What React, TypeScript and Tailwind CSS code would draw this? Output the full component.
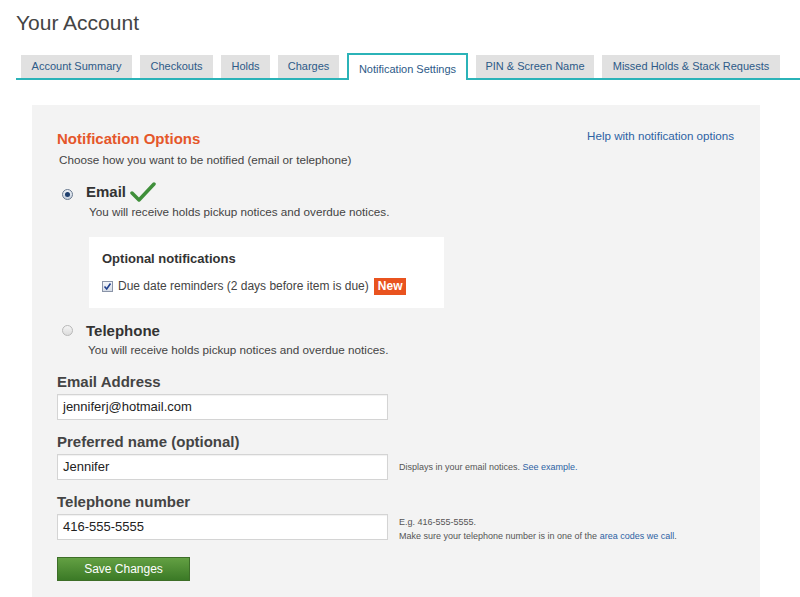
import { useState } from "react";

// ---------------------------------------------------------------------------
// Account tabs
// ---------------------------------------------------------------------------

const TABS = [
  { label: "Account Summary", w: "w-[111px]" },
  { label: "Checkouts", w: "w-[73px]" },
  { label: "Holds", w: "w-[49px]" },
  { label: "Charges", w: "w-[61px]" },
  { label: "Notification Settings", w: "w-[121px]", active: true },
  { label: "PIN & Screen Name", w: "w-[118px]" },
  { label: "Missed Holds & Stack Requests", w: "w-[178px]" },
];

function Tabs() {
  return (
    <div className="ml-[16px] flex items-end gap-[8px] border-b-2 border-[#2bb3b8] pl-[5px]">
      {TABS.map((t) =>
        t.active ? (
          <div
            key={t.label}
            className={`${t.w} -mb-[2px] flex h-[27px] items-center justify-center border-2 border-b-0 border-[#2bb3b8] bg-white pt-[3px] text-[11px] text-[#2d5a88]`}
          >
            {t.label}
          </div>
        ) : (
          <div
            key={t.label}
            className={`${t.w} flex h-[23px] items-center justify-center bg-[#e1e1e1] text-[11px] text-[#2d5a88]`}
          >
            {t.label}
          </div>
        )
      )}
    </div>
  );
}

// ---------------------------------------------------------------------------
// Small form bits
// ---------------------------------------------------------------------------

function Radio({ checked }: { checked?: boolean }) {
  return (
    <span
      className={`inline-flex h-[11px] w-[11px] items-center justify-center rounded-full border ${
        checked ? "border-[#6a7a90] bg-gradient-to-b from-[#eef2f8] to-[#c8d2de]" : "border-[#b8b8b8] bg-gradient-to-b from-[#f4f4f4] to-[#dcdcdc]"
      }`}
    >
      {checked && <span className="h-[5px] w-[5px] rounded-full bg-[#1f3f6e]" />}
    </span>
  );
}

function Check() {
  return (
    <svg width="26" height="22" viewBox="0 0 26 22" className="ml-[4px]">
      <path d="M2 12 L9 19 L24 3" fill="none" stroke="#3f8f3a" strokeWidth="3.5" strokeLinecap="round" strokeLinejoin="round" />
    </svg>
  );
}

function Field({ label, value, children }: { label: string; value: string; children?: React.ReactNode }) {
  return (
    <div className="mt-[13px]">
      <div className="text-[15px] font-bold leading-[18px] text-[#444]">{label}</div>
      <div className="mt-[3px] flex items-start">
        <div className="flex h-[26px] w-[331px] items-center border border-[#d4d4d4] bg-white px-[5px] text-[13px] text-[#222] shadow-[inset_0_1px_1px_rgba(0,0,0,0.06)]">
          {value}
        </div>
        <div className="ml-[11px] text-[9px] leading-[14px] text-[#555]">{children}</div>
      </div>
    </div>
  );
}

// ---------------------------------------------------------------------------
// Page
// ---------------------------------------------------------------------------

export default function App() {
  const [dueReminders, setDueReminders] = useState(true);

  return (
    <div className="h-[597px] overflow-hidden bg-white font-['Liberation_Sans',Arial,sans-serif]">
      <h1 className="pl-[16px] pt-[9px] text-[21px] leading-[28px] text-[#444]">Your Account</h1>

      <div className="mt-[16px]">
        <Tabs />
      </div>

      <div className="ml-[32px] mt-[25px] w-[728px] bg-[#f3f3f3] px-[25px] pt-[24px] pb-[30px]">
        <div className="flex items-start justify-between">
          <h2 className="text-[15px] font-bold leading-[20px] text-[#e5572a]">Notification Options</h2>
          <a className="mr-[1px] -mt-[2px] text-[11.6px] text-[#2d62a3]">Help with notification options</a>
        </div>
        <p className="ml-[2px] mt-[3px] text-[11.7px] leading-[16px] text-[#444]">
          Choose how you want to be notified (email or telephone)
        </p>

        {/* Email option */}
        <div className="mt-[12px] flex items-center">
          <span className="ml-[5px] mr-[13px]"><Radio checked /></span>
          <span className="text-[15px] font-bold leading-[18px] text-[#333]">Email</span>
          <Check />
        </div>
        <p className="ml-[32px] text-[11.7px] leading-[15px] text-[#444]">
          You will receive holds pickup notices and overdue notices.
        </p>

        <div className="ml-[32px] mt-[18px] w-[355px] bg-white px-[13px] pb-[13px] pt-[14px]">
          <div className="text-[13px] font-bold leading-[16px] text-[#333]">Optional notifications</div>
          <label className="mt-[10px] flex items-center text-[12px] text-[#444]">
            <span
              onClick={() => setDueReminders(!dueReminders)}
              className="mr-[5px] flex h-[11px] w-[11px] items-center justify-center border border-[#8a94a8] bg-gradient-to-b from-[#f4f6fa] to-[#d6dce6]"
            >
              {dueReminders && (
                <svg width="9" height="9" viewBox="0 0 9 9">
                  <path d="M1.5 4.5 L3.7 7 L7.5 1.5" fill="none" stroke="#1f3f8e" strokeWidth="1.6" />
                </svg>
              )}
            </span>
            Due date reminders (2 days before item is due)
            <span className="ml-[5px] bg-[#e9531f] px-[4px] py-[1px] text-[12px] font-bold leading-[15px] text-white">New</span>
          </label>
        </div>

        {/* Telephone option */}
        <div className="mt-[11px] flex items-center">
          <span className="ml-[5px] mr-[13px]"><Radio /></span>
          <span className="text-[15px] font-bold leading-[18px] text-[#333]">Telephone</span>
        </div>
        <p className="ml-[31px] -mt-[1px] text-[11.7px] leading-[15px] text-[#444]">
          You will receive holds pickup notices and overdue notices.
        </p>

        <div className="mt-[3px] flex flex-col">
          <Field label="Email Address" value="jenniferj@hotmail.com" />
          <Field label="Preferred name (optional)" value="Jennifer">
            <div className="mt-[6px]">
              Displays in your email notices. <a className="text-[#2d62a3]">See example.</a>
            </div>
          </Field>
          <Field label="Telephone number" value="416-555-5555">
            <div className="mt-[1px]">E.g. 416-555-5555.</div>
            <div>
              Make sure your telephone number is in one of the <a className="text-[#2d62a3]">area codes we call</a>.
            </div>
          </Field>
        </div>

        <button className="mt-[14px] h-[24px] w-[133px] border border-[#3d6e28] bg-gradient-to-b from-[#63a043] to-[#3b7a26] text-[12px] text-white">
          Save Changes
        </button>
      </div>
    </div>
  );
}
